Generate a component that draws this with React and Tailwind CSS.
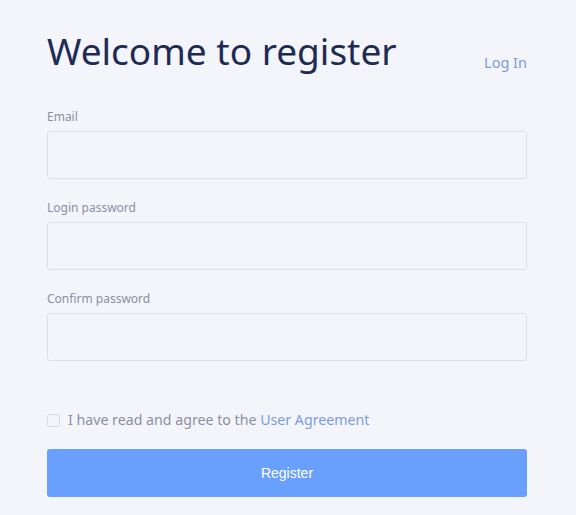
export default function App() {
  const font = { fontFamily: '"Noto Sans", "Open Sans", sans-serif' };
  const Field = ({ label, type }) => (
    <div className="flex flex-col">
      <label className="text-[12px] leading-[16px] text-[#8a8fa6] mb-[6px]">{label}</label>
      <input type={type} className="h-[48px] w-full rounded-[3px] border border-[#dcdee8] bg-[#f4f5fa] outline-none px-3" />
    </div>
  );
  return (
    <div className="w-[576px] h-[515px] bg-[#f4f5fa] overflow-hidden" style={font}>
      <div className="w-[480px] ml-[47px] pt-[28px]">
        <div className="flex items-start justify-between">
          <h1 className="text-[37px] leading-[46px] text-[#1e2b55] font-normal">Welcome to register</h1>
          <a className="text-[14.5px] leading-[20px] text-[#7a9ce0] mt-[24px]">Log In</a>
        </div>
        <div className="mt-[35px] flex flex-col gap-[21px]">
          <Field label="Email" type="text" />
          <Field label="Login password" type="password" />
          <Field label="Confirm password" type="password" />
        </div>
        <div className="mt-[49px] flex items-center gap-[8px]">
          <span className="w-[13px] h-[13px] border border-[#d8dbe4] rounded-[2px] bg-[#f4f5fa]" />
          <span className="text-[14.2px] leading-[20px] text-[#8a8fa6]">
            I have read and agree to the <span className="text-[#7a9ce0]">User Agreement</span>
          </span>
        </div>
        <button className="mt-[19px] w-full h-[48px] rounded-[3px] bg-[#699ffd] text-white text-[14px]" style={{ fontFamily: '"Liberation Sans", Arial, sans-serif' }}>
          Register
        </button>
      </div>
    </div>
  );
}
